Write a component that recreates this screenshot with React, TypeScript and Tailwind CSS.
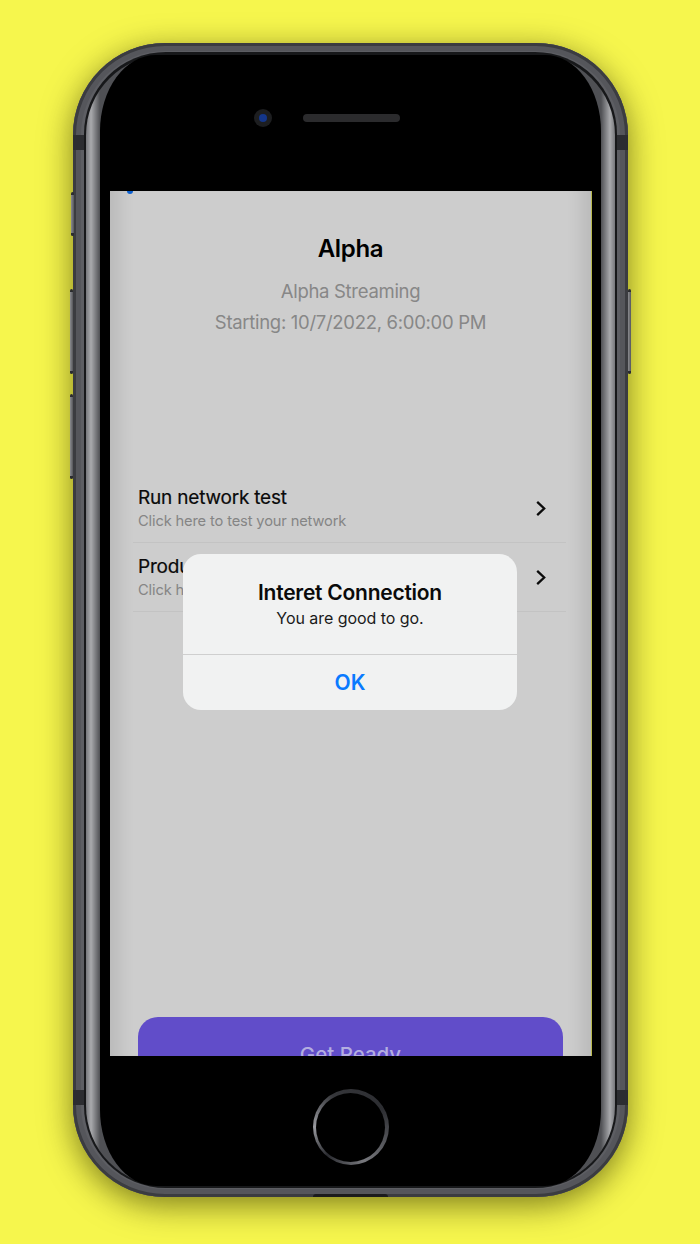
const font = "font-['Inter','Liberation_Sans',sans-serif]";

function Chevron() {
  return (
    <svg width="12" height="17" viewBox="0 0 12 17" fill="none" className="shrink-0">
      <path d="M2.2 1.8 L9.2 8.5 L2.2 15.2" stroke="#0b0b0b" strokeWidth="2.3" />
    </svg>
  );
}

function Row({ title, sub }: { title: string; sub: string }) {
  return (
    <div className="flex h-[69px] items-center justify-between border-b border-[#c3c3c3] pl-[5px] pr-[19px]">
      <div className="flex flex-col">
        <span className="text-[19px] leading-[26px] font-normal tracking-[-0.2px] text-[#0a0a0a] [-webkit-text-stroke:0.2px_#0a0a0a]">{title}</span>
        <span className="mt-[-1px] text-[14.7px] leading-[22px] tracking-[-0.15px] text-[#858585]">{sub}</span>
      </div>
      <Chevron />
    </div>
  );
}

function SideButton({ className }: { className: string }) {
  return (
    <div className={`absolute rounded-[2px] border-y-[3px] border-y-[#2b2c30] bg-[linear-gradient(90deg,#8b8c90,#55565a)] ${className}`} />
  );
}

export default function App() {
  return (
    <div className={`${font} h-[1244px] w-[700px] overflow-hidden bg-[#f6f64d] pl-[73px] pt-[43px]`}>
      <div className="relative h-[1154px] w-[555px] rounded-[92px] bg-[#5d5e63] p-[11px] pt-[9px] pb-[9px] shadow-[inset_0_0_0_3px_#3b3c40,inset_0_0_0_8px_#55565b,0_8px_32px_rgba(60,60,0,0.65)]">
        <SideButton className="left-[-2.5px] top-[149px] h-[44px] w-[3px]" />
        <SideButton className="left-[-3px] top-[246px] h-[85px] w-[3px]" />
        <SideButton className="left-[-3px] top-[351px] h-[85px] w-[3px]" />
        <SideButton className="right-[-3px] top-[246px] h-[85px] w-[3px]" />
        <div className="absolute left-0 top-[92px] h-[15px] w-[11px] bg-[#2c2d31]" />
        <div className="absolute right-0 top-[92px] h-[15px] w-[11px] bg-[#2c2d31]" />
        <div className="absolute bottom-[92px] left-0 h-[15px] w-[11px] bg-[#2c2d31]" />
        <div className="absolute bottom-[92px] right-0 h-[15px] w-[11px] bg-[#2c2d31]" />
        <div className="absolute bottom-0 left-[240px] h-[3px] w-[75px] rounded-t-[3px] bg-[#1b1b1d]" />

        <div className="h-full rounded-[82px] bg-[#17181a] px-[2px] pt-[3px] pb-[2px]">
          <div className="h-full rounded-[80px] bg-[linear-gradient(90deg,#77787c_0px,#a9aaad_5px,#4f5054_14px,#4f5054_515px,#a9aaad_524px,#77787c_529px)] px-[14px]">
            <div className="h-full rounded-[56px/76px] bg-black">
              <div className="h-[136px] pl-[154px] pt-[54px]">
                <div className="flex items-center gap-[31px]">
                  <div className="flex h-[18px] w-[18px] items-center justify-center rounded-full bg-[#1d1e20]">
                    <div className="h-[8px] w-[8px] rounded-full bg-[#14368a]" />
                  </div>
                  <div className="h-[8px] w-[97px] rounded-full bg-[#2b2b2d]" />
                </div>
              </div>

              <div className="relative mx-[10px] flex h-[865px] w-[482px] flex-col overflow-hidden border-r border-[#b9b94e] bg-[#cdcdcd] shadow-[inset_22px_0_16px_-12px_rgba(0,0,0,0.09),inset_-22px_0_16px_-12px_rgba(0,0,0,0.09)]">
                <div className="absolute left-[17px] top-0 h-[3px] w-[6px] rounded-b-full bg-[#0a5fd0]" />
                <div className="pt-[42px] text-center text-[24px] leading-[32px] font-semibold tracking-[-0.3px] text-black">Alpha</div>
                <div className="mt-[11px] text-center text-[18.5px] leading-[31px] tracking-[-0.3px] text-[#878787]">
                  <div>Alpha Streaming</div>
                  <div>Starting: 10/7/2022, 6:00:00 PM</div>
                </div>
                <div className="ml-[23px] mr-[25px] mt-[136px]">
                  <Row title="Run network test" sub="Click here to test your network" />
                  <Row title="Product check" sub="Click here to check your product" />
                </div>
                <div className="mx-[28px] mb-[-41px] mt-auto flex h-[80px] shrink-0 justify-center rounded-[20px] bg-[#614dc9] pt-[25px] text-[20.5px] leading-[26px] font-medium text-[#b4aee0]">
                  Get Ready
                </div>

                <div className="absolute left-[73px] top-[363px] w-[334px] rounded-[18px] bg-[#f1f2f2] text-center">
                  <div className="h-[101px] border-b border-[#cfcfcf] pt-[24px]">
                    <div className="text-[21px] leading-[30px] font-semibold tracking-[-0.25px] text-[#0a0a0a]">Interet Connection</div>
                    <div className="mt-[-2px] text-[16px] leading-[24px] tracking-[-0.05px] text-[#1a1a1a]">You are good to go.</div>
                  </div>
                  <div className="flex h-[55px] items-center justify-center text-[21px] font-semibold text-[#0a7aff]">OK</div>
                </div>
              </div>

              <div className="pt-[33px]">
                <div className="mx-auto h-[76px] w-[76px] rounded-full bg-[conic-gradient(from_220deg,#2a2b30,#9a9ba0_50deg,#35363a_110deg,#2c2d31_200deg,#77787d_300deg,#2a2b30)] p-[3.5px]">
                  <div className="h-full w-full rounded-full bg-black" />
                </div>
              </div>
            </div>
          </div>
        </div>
      </div>
    </div>
  );
}
